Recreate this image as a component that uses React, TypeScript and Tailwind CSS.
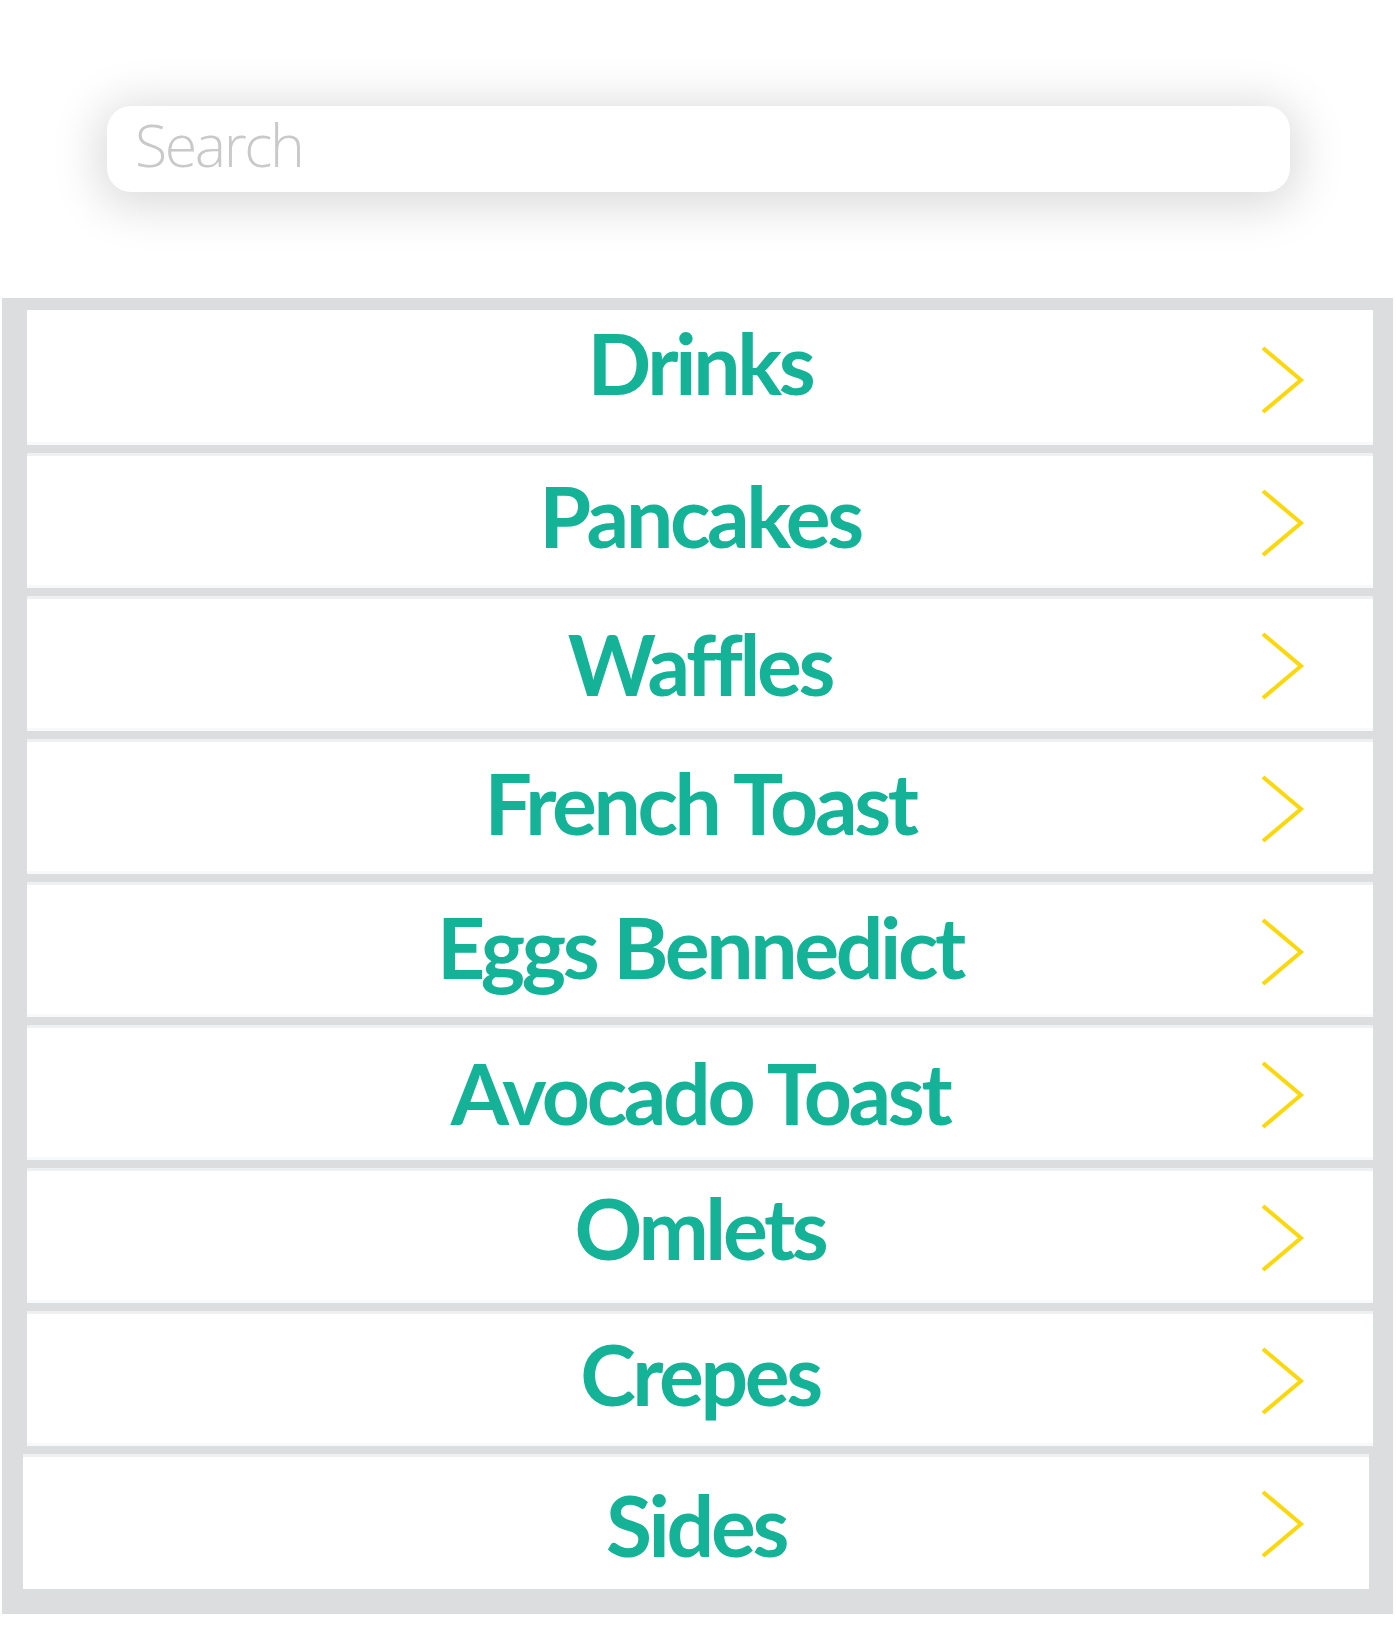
import React from 'react';

// text nudges per row, the artwork isn't perfectly aligned
const categories = [
  { name: 'Drinks', pad: 'pb-[30px]' },
  { name: 'Pancakes', pad: 'pb-[10px]' },
  { name: 'Waffles', pad: 'pb-0' },
  { name: 'French Toast', pad: 'pb-[8px]' },
  { name: 'Eggs Bennedict', pad: 'pb-[6px]' },
  { name: 'Avocado Toast', pad: 'pb-0' },
  { name: 'Omlets', pad: 'pb-[16px]' },
  { name: 'Crepes', pad: 'pb-[10px]' },
  { name: 'Sides', pad: 'pt-[6px]' },
];

function Chevron() {
  return (
    <svg width="44" height="68" viewBox="0 0 44 68" fill="none" className="shrink-0">
      <polyline points="2,2 40,34 2,66" stroke="#fbd80c" strokeWidth="4" strokeLinejoin="miter" />
    </svg>
  );
}

export default function App() {
  return (
    <div className="w-[1396px] h-[1632px] bg-white overflow-hidden">
      {/* Search */}
      <div className="pt-[106px] pl-[107px] pr-[106px]">
        <div className="h-[86px] rounded-[24px] bg-white shadow-[0_6px_48px_8px_rgba(0,0,0,0.15)] flex items-center pl-[28px] pb-[10px]">
          <span
            className="text-[59px] font-light tracking-[-0.04em] text-[#c9c9c9] leading-none"
            style={{ fontFamily: '"Open Sans", "Liberation Sans", sans-serif' }}
          >
            Search
          </span>
        </div>
      </div>

      {/* Category list */}
      <div className="mt-[106px] ml-[2px] w-[1391px] bg-[#dcdddf] pt-[12px] pb-[25px] pl-[25px] pr-[20px] flex flex-col gap-[8px]">
        {categories.map((cat, i) => {
          const last = i === categories.length - 1;
          return (
            <div
              key={cat.name}
              className={`h-[135px] bg-white flex items-center relative border-t-[3px] border-b-[3px] ${
                i === 0 ? 'border-t-white' : 'border-t-[#eff0f2]'
              } ${last ? '-ml-[4px] mr-[4px] border-b-white' : 'border-b-[#f8f9fb]'}`}
            >
              <span
                className={`flex-1 text-center text-[84px] font-bold tracking-[-0.04em] text-[#14b296] leading-none ${cat.pad}`}
                style={{ fontFamily: 'Lato, "Liberation Sans", sans-serif' }}
              >
                {cat.name}
              </span>
              <div
                className={`absolute top-1/2 -translate-y-1/2 mt-[2px] ${last ? 'right-[64px]' : 'right-[68px]'}`}
              >
                <Chevron />
              </div>
            </div>
          );
        })}
      </div>
    </div>
  );
}
